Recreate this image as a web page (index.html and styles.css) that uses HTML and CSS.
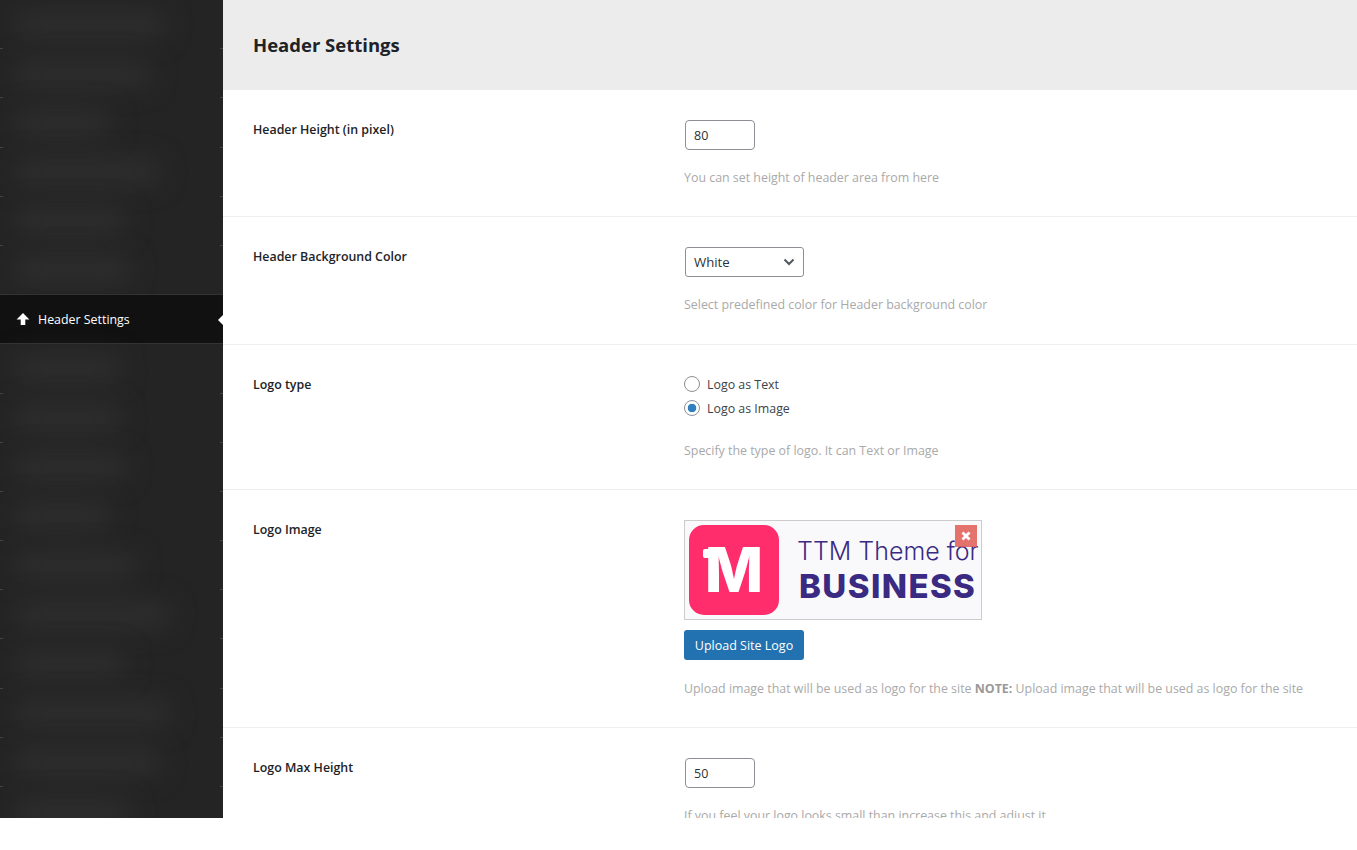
FILE: index.html
```html
<!DOCTYPE html>
<html lang="en">

<head>
    <meta charset="UTF-8">
    <meta name="viewport" content="width=device-width, initial-scale=1.0">
    <title>Header Settings</title>
    <link rel="stylesheet" href="styles.css">
</head>

<body>
    <div class="admin-page">
        <aside class="side-menu">
            <div class="menu-item"><span class="menu-blur w-150"></span></div>
            <div class="menu-item"><span class="menu-blur w-135"></span></div>
            <div class="menu-item"><span class="menu-blur w-95"></span></div>
            <div class="menu-item"><span class="menu-blur w-145"></span></div>
            <div class="menu-item"><span class="menu-blur w-110"></span></div>
            <div class="menu-item menu-item-last"><span class="menu-blur w-115"></span></div>
            <div class="menu-item active">
                <svg class="menu-icon" viewBox="0 0 14 14" width="14" height="14">
                    <path d="M7 1 L13.4 7.4 L10.6 7.4 L9.3 7.4 L9.3 13 L4.7 13 L4.7 7.4 L0.6 7.4 Z" fill="#fff"/>
                </svg>
                <span>Header Settings</span>
            </div>
            <div class="menu-item"><span class="menu-blur w-105"></span></div>
            <div class="menu-item"><span class="menu-blur w-105"></span></div>
            <div class="menu-item"><span class="menu-blur w-110"></span></div>
            <div class="menu-item"><span class="menu-blur w-95"></span></div>
            <div class="menu-item"><span class="menu-blur w-120"></span></div>
            <div class="menu-item"><span class="menu-blur w-155"></span></div>
            <div class="menu-item"><span class="menu-blur w-110"></span></div>
            <div class="menu-item"><span class="menu-blur w-155"></span></div>
            <div class="menu-item"><span class="menu-blur w-145"></span></div>
            <div class="menu-item"><span class="menu-blur w-115"></span></div>
        </aside>

        <main class="settings">
            <h1 class="settings-title">Header Settings</h1>

            <section class="setting-row">
                <label class="setting-label">Header Height (in pixel)</label>
                <div class="setting-field">
                    <input class="num-input" type="text" value="80">
                    <p class="setting-desc">You can set height of header area from here</p>
                </div>
            </section>

            <section class="setting-row row-select">
                <label class="setting-label">Header Background Color</label>
                <div class="setting-field">
                    <div class="select-box">
                        <span>White</span>
                        <svg viewBox="0 0 12 8" width="12" height="8">
                            <path d="M1.5 1.5 L6 6 L10.5 1.5" fill="none" stroke="#50575e" stroke-width="2"/>
                        </svg>
                    </div>
                    <p class="setting-desc">Select predefined color for Header background color</p>
                </div>
            </section>

            <section class="setting-row">
                <label class="setting-label">Logo type</label>
                <div class="setting-field field-radio">
                    <div class="radio-line"><span class="radio"></span>Logo as Text</div>
                    <div class="radio-line"><span class="radio checked"></span>Logo as Image</div>
                    <p class="setting-desc desc-radio">Specify the type of logo. It can Text or Image</p>
                </div>
            </section>

            <section class="setting-row">
                <label class="setting-label">Logo Image</label>
                <div class="setting-field">
                    <div class="logo-preview">
                        <div class="logo-mark">M</div>
                        <div class="logo-words">
                            <span class="logo-line1">TTM Theme for</span>
                            <span class="logo-line2">BUSINESS</span>
                        </div>
                        <span class="logo-remove">
                            <svg viewBox="0 0 10 10" width="10" height="10">
                                <path d="M1.5 1.5 L8.5 8.5 M8.5 1.5 L1.5 8.5" stroke="#fff" stroke-width="2.8"/>
                            </svg>
                        </span>
                    </div>
                    <button class="upload-btn">Upload Site Logo</button>
                    <p class="setting-desc desc-logo">Upload image that will be used as logo for the site <b>NOTE:</b> Upload image that will be used as logo for the site</p>
                </div>
            </section>

            <section class="setting-row">
                <label class="setting-label">Logo Max Height</label>
                <div class="setting-field">
                    <input class="num-input" type="text" value="50">
                    <p class="setting-desc">If you feel your logo looks small than increase this and adjust it</p>
                </div>
            </section>
        </main>
    </div>
</body>

</html>
```

FILE: styles.css
```css
body {
    margin: 0;
    background-color: #fff;
    font-family: "Open Sans", "Noto Sans", sans-serif;
    font-size: 12.4px;
    color: #1d2327;
}

.admin-page {
    display: flex;
    height: 818px;
    overflow: hidden;
}

/* sidebar */
.side-menu {
    width: 223px;
    flex-shrink: 0;
    background-color: #242424;
    overflow: hidden;
}

.menu-item {
    position: relative;
    display: flex;
    align-items: center;
    height: 49.2px;
    box-sizing: border-box;
    padding-left: 15px;
}

/* the separators only show at the edges, the middle is blurred away */
.menu-item::before,
.menu-item::after {
    content: "";
    position: absolute;
    bottom: 0;
    height: 1px;
    background-color: #444;
}

.menu-item::before {
    left: 0;
    width: 3px;
}

.menu-item::after {
    right: 0;
    width: 3px;
}

.menu-blur {
    display: block;
    height: 24px;
    background-color: #2f2f2f;
    border-radius: 8px;
    filter: blur(13px);
}

.w-95 { width: 95px; }
.w-105 { width: 105px; }
.w-110 { width: 110px; }
.w-115 { width: 115px; }
.w-120 { width: 120px; }
.w-135 { width: 135px; }
.w-145 { width: 145px; }
.w-150 { width: 150px; }
.w-155 { width: 155px; }

.menu-item-last {
    border-bottom: 1px solid #333;
}

.menu-item-last::before,
.menu-item-last::after {
    display: none;
}

.menu-item.active {
    gap: 8px;
    padding-left: 16px;
    background-color: #111;
    border-bottom: 1px solid #333;
    color: #fff;
}

.menu-item.active::before {
    display: none;
}

.menu-item.active::after {
    right: 0;
    bottom: auto;
    top: 20px;
    width: 0;
    height: 0;
    background: none;
    border-style: solid;
    border-width: 5px 5px 5px 0;
    border-color: transparent #fff transparent transparent;
}

.menu-icon {
    flex-shrink: 0;
}

/* main panel */
.settings {
    flex: 1;
    min-width: 0;
}

.settings-title {
    margin: 0;
    height: 90px;
    box-sizing: border-box;
    padding-left: 30px;
    background-color: #ececec;
    font-size: 18.5px;
    font-weight: 700;
    line-height: 90px;
}

.setting-row {
    display: grid;
    grid-template-columns: 432px 1fr;
    padding: 30px 30px 29px;
    border-bottom: 1px solid #eee;
}

.row-select {
    padding-bottom: 30px;
}

.setting-label {
    padding-top: 1px;
    font-weight: 600;
    line-height: 18px;
}

.setting-desc {
    margin: 18px 0 0 -1px;
    color: #a9a9a9;
    line-height: 19px;
}

.setting-desc b {
    font-weight: 700;
    color: #999;
}

.num-input {
    display: block;
    box-sizing: border-box;
    width: 70px;
    height: 30px;
    padding: 0 8px;
    border: 1px solid #8c8f94;
    border-radius: 4px;
    font-family: inherit;
    font-size: 12.5px;
    color: #2c3338;
    outline: none;
}

.select-box {
    display: flex;
    align-items: center;
    justify-content: space-between;
    box-sizing: border-box;
    width: 119px;
    height: 30px;
    padding: 0 8px;
    border: 1px solid #8c8f94;
    border-radius: 3px;
    font-size: 13.2px;
    color: #2c3338;
}

.field-radio {
    margin-top: -3px;
}

.radio-line {
    display: flex;
    align-items: center;
    gap: 7px;
    height: 24px;
    margin-left: -1px;
    color: #3c434a;
}

.radio {
    box-sizing: border-box;
    width: 16px;
    height: 16px;
    border: 1px solid #8c8f94;
    border-radius: 50%;
    background-color: #fff;
}

.radio.checked {
    background: radial-gradient(circle, #2f7fc1 0 4px, #fff 4.6px);
}

.desc-radio {
    margin-top: 21px;
}

.desc-logo {
    margin-top: 19px;
}

/* logo picture */
.logo-preview {
    position: relative;
    display: flex;
    align-items: center;
    gap: 18px;
    box-sizing: border-box;
    width: 298px;
    height: 100px;
    margin-left: -1px;
    padding-left: 4px;
    border: 1px solid #ccc;
    background-color: #f9f9fb;
    overflow: hidden;
}

.logo-mark {
    position: relative;
    flex-shrink: 0;
    width: 90px;
    height: 90px;
    border-radius: 15px;
    background-color: #ff2d6b;
    color: #fff;
    font-family: Inter, sans-serif;
    font-size: 62px;
    font-weight: 800;
    line-height: 90px;
    text-align: center;
}

/* top bar of the T that is merged into the M */
.logo-mark::before {
    content: "";
    position: absolute;
    left: 14px;
    top: 24px;
    width: 12px;
    height: 9px;
    border-radius: 2px 0 0 2px;
    background-color: #fff;
}

.logo-words {
    display: flex;
    flex-direction: column;
    color: #3a2a82;
    font-family: Inter, sans-serif;
    white-space: nowrap;
}

.logo-line1 {
    font-size: 25px;
    font-weight: 300;
    line-height: 32px;
}

.logo-line2 {
    margin-left: 2px;
    font-size: 33px;
    font-weight: 800;
    letter-spacing: 1.4px;
    line-height: 38px;
}

.logo-remove {
    position: absolute;
    top: 4px;
    right: 4px;
    display: flex;
    align-items: center;
    justify-content: center;
    width: 22px;
    height: 22px;
    background-color: rgba(226, 92, 84, 0.85);
}

.upload-btn {
    display: block;
    width: 120px;
    height: 30px;
    margin: 10px 0 0 -1px;
    padding: 0;
    border: none;
    border-radius: 3px;
    background-color: #2271b1;
    color: #fff;
    font-family: inherit;
    font-size: 12.5px;
}
```
